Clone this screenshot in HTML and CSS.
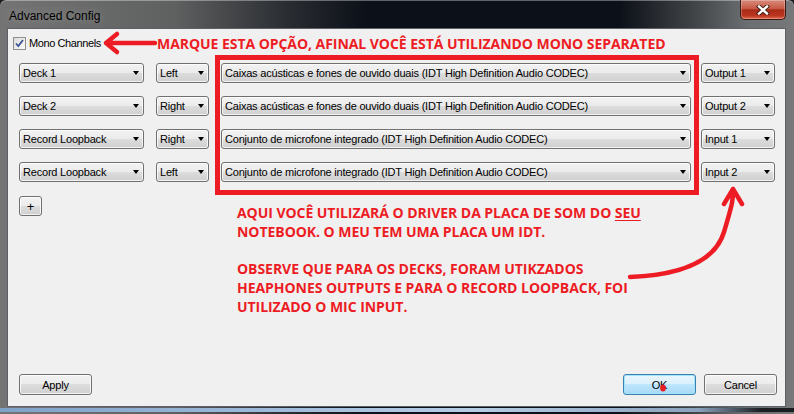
FILE: index.html
```html
<!DOCTYPE html>
<html lang="pt">
<head>
  <meta charset="UTF-8">
  <title>Advanced Config</title>
  <link rel="stylesheet" href="styles.css">
</head>
<body>
<div class="window">
  <div class="titlebar">
    <span class="title">Advanced Config</span>
    <button class="close">
      <svg width="14" height="10" viewBox="0 0 14 10">
        <path d="M3 1.5 L11 8.5 M11 1.5 L3 8.5" stroke="#3a1a12" stroke-width="4.2" stroke-linecap="square"/>
        <path d="M3 1.5 L11 8.5 M11 1.5 L3 8.5" stroke="#fff" stroke-width="2.4" stroke-linecap="square"/>
      </svg>
    </button>
  </div>

  <div class="client">
    <label class="mono">
      <span class="check">
        <svg width="11" height="11" viewBox="0 0 11 11">
          <path d="M2 5.5 L4.3 8 L9 2" fill="none" stroke="#3b5596" stroke-width="1.8"/>
        </svg>
      </span>
      Mono Channels
    </label>

    <div class="routes">
      <div class="combo"><span>Deck 1</span><i class="caret"></i></div>
      <div class="combo"><span>Left</span><i class="caret"></i></div>
      <div class="combo"><span>Caixas acústicas e fones de ouvido duais (IDT High Definition Audio CODEC)</span><i class="caret"></i></div>
      <div class="combo ch"><span>Output 1</span><i class="caret"></i></div>

      <div class="combo"><span>Deck 2</span><i class="caret"></i></div>
      <div class="combo"><span>Right</span><i class="caret"></i></div>
      <div class="combo"><span>Caixas acústicas e fones de ouvido duais (IDT High Definition Audio CODEC)</span><i class="caret"></i></div>
      <div class="combo ch"><span>Output 2</span><i class="caret"></i></div>

      <div class="combo"><span>Record Loopback</span><i class="caret"></i></div>
      <div class="combo"><span>Right</span><i class="caret"></i></div>
      <div class="combo"><span>Conjunto de microfone integrado (IDT High Definition Audio CODEC)</span><i class="caret"></i></div>
      <div class="combo ch"><span>Input 1</span><i class="caret"></i></div>

      <div class="combo"><span>Record Loopback</span><i class="caret"></i></div>
      <div class="combo"><span>Left</span><i class="caret"></i></div>
      <div class="combo"><span>Conjunto de microfone integrado (IDT High Definition Audio CODEC)</span><i class="caret"></i></div>
      <div class="combo ch"><span>Input 2</span><i class="caret"></i></div>
    </div>

    <button class="btn add">+</button>

    <div class="actions">
      <button class="btn wide">Apply</button>
      <div class="group">
        <button class="btn wide default">OK</button>
        <button class="btn wide">Cancel</button>
      </div>
    </div>
  </div>

  <!-- anotações por cima da janela -->
  <p class="note note-top">MARQUE ESTA OPÇÃO, AFINAL VOCÊ ESTÁ UTILIZANDO MONO SEPARATED</p>
  <div class="note-box"></div>
  <p class="note note-body">AQUI VOCÊ UTILIZARÁ O DRIVER DA PLACA DE SOM DO <u>SEU</u><br>NOTEBOOK. O MEU TEM UMA PLACA UM IDT.<br><br>OBSERVE QUE PARA OS DECKS, FORAM UTIKZADOS<br>HEAPHONES OUTPUTS E PARA O RECORD LOOPBACK, FOI<br>UTILIZADO O MIC INPUT.</p>
  <svg class="marks" width="794" height="414" viewBox="0 0 794 414">
    <g fill="none" stroke="#ed1c24" stroke-width="4.5" stroke-linecap="round" stroke-linejoin="round">
      <path d="M106 43 H155 M106 43 L117 34 M106 43 L117 52"/>
      <path d="M630 277 C 680 275 715 262 724 232 S 733 200 733 190 M733 189 L724 204 M733 189 L742 204"/>
    </g>
    <ellipse cx="663" cy="388" rx="2.8" ry="3.6" fill="#ed1c24"/>
  </svg>
</div>
</body>
</html>
```

FILE: styles.css
```css
body {
  margin: 0;
  background: #1c2026;
  font-family: "Liberation Sans", Arial, sans-serif;
}
.window {
  position: relative;
  width: 794px;
  height: 414px;
  display: flex;
  flex-direction: column;
  border-radius: 6px 6px 0 0;
  overflow: hidden;
  background:
    linear-gradient(to right, #7fa2c9, #b7cde6 60%, #8aa2bd 88%, #1b1d20 96%) left bottom 2px / 100% 4px no-repeat,
    linear-gradient(to right, #747474 0, #5f6060 22%, #2a2d32 36%, #0c1018 46%, #0c1018 78%, #3f4245 87%, #6b6e70 94%, #76787a 100%);
  box-shadow: inset 0 1px 0 rgba(255,255,255,.35);
}
.titlebar {
  height: 28px;
  display: flex;
  align-items: flex-start;
}
.title {
  margin: 9px 0 0 9px;
  font-size: 12px;
  line-height: 14px;
  color: #000;
  text-shadow: 0 0 8px rgba(255,255,255,.35);
}
.close {
  margin: 0 8px 0 auto;
  width: 46px;
  height: 20px;
  padding: 0;
  display: flex;
  align-items: center;
  justify-content: center;
  border: 1px solid #3b1a14;
  border-top: 0;
  border-radius: 0 0 5px 5px;
  background: linear-gradient(#d88b7c 0, #c75a45 45%, #a92b17 52%, #bb3520 82%, #e06a4e 100%);
  box-shadow: inset 0 0 0 1px rgba(255,255,255,.25);
}
.client {
  flex: 1;
  margin: 0 8px 7px 7px;
  border: 1px solid #5d6167;
  background: #f0f0f0;
  display: flex;
  flex-direction: column;
  padding-left: 11px;
  font-size: 11px;
  letter-spacing: -0.2px;
  color: #000;
}
.mono {
  display: flex;
  align-items: center;
  gap: 3px;
  height: 16px;
  margin: 6px 0 0 -6px;
  letter-spacing: -0.4px;
}
.check {
  width: 13px;
  height: 13px;
  box-sizing: border-box;
  border: 1px solid #8e8f8f;
  background: linear-gradient(135deg, #dcdcdc, #fbfbfb);
  display: flex;
  align-items: center;
  justify-content: center;
}
.routes {
  display: grid;
  grid-template-columns: 125px 53px 470px 72px;
  column-gap: 12px;
  row-gap: 13px;
  margin-top: 12px;
}
.combo, .btn {
  box-sizing: border-box;
  border: 1px solid #707070;
  border-radius: 3px;
  background: linear-gradient(#f2f2f2 0, #ebebeb 50%, #dddddd 50%, #cfcfcf 100%);
  box-shadow: inset 0 0 0 1px rgba(255,255,255,.75);
}
.combo {
  height: 20px;
  display: flex;
  align-items: center;
  padding: 0 4px 0 3px;
}
.combo span {
  flex: 1;
  white-space: nowrap;
  overflow: hidden;
}
.combo.ch {
  margin-left: -2px;
}
.caret {
  width: 0;
  height: 0;
  border-left: 3.5px solid transparent;
  border-right: 3.5px solid transparent;
  border-top: 4px solid #000;
}
.btn {
  height: 21px;
  padding: 0;
  font: inherit;
  letter-spacing: inherit;
  color: #000;
}
.add {
  width: 23px;
  height: 20px;
  margin-top: 14px;
  font-size: 13px;
}
.wide {
  width: 73px;
}
.default {
  border-color: #3c7fb1;
  background: linear-gradient(#eaf6fd 0, #d9f0fc 50%, #bee6fd 50%, #a7d9f5 100%);
  box-shadow: inset 0 0 0 1px #9fe5fb;
}
.actions {
  margin-top: auto;
  margin-bottom: 11px;
  padding-right: 8px;
  display: flex;
  justify-content: space-between;
}
.group {
  display: flex;
  gap: 8px;
}
.note {
  position: absolute;
  margin: 0;
  color: #ed1c24;
  font: 700 14px/18.7px "Open Sans", sans-serif;
  letter-spacing: -0.05px;
  white-space: nowrap;
}
.note u {
  text-decoration-thickness: 1px;
  text-underline-offset: 2px;
}
.note-top {
  left: 157px;
  top: 35px;
}
.note-body {
  left: 237px;
  top: 204px;
}
.note-box {
  position: absolute;
  left: 215px;
  top: 55px;
  width: 484px;
  height: 140px;
  box-sizing: border-box;
  border: 5px solid #ed1c24;
}
.marks {
  position: absolute;
  left: 0;
  top: 0;
  pointer-events: none;
}
```
